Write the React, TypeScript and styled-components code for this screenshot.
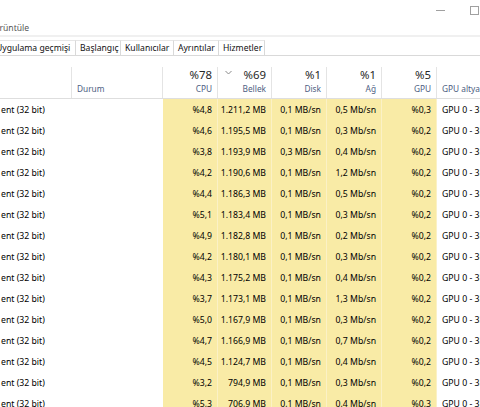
import React from "react";
import styled, { createGlobalStyle } from "styled-components";

const GlobalStyle = createGlobalStyle`
  html, body {
    margin: 0;
    padding: 0;
    background: #ffffff;
  }
  body {
    font-family: "Segoe UI", "Noto Sans", "Liberation Sans", sans-serif;
    color: #000;
  }
`;

const YELLOW = "#f9eba6";
const LABEL = "#4d6082";
const COLS = "72px 91px 55px 54px 55px 55px 55px 90px";

const Window = styled.div`
  width: 480px;
  height: 407px;
  overflow: hidden;
  background: #fff;
`;

const TitleBar = styled.div`
  height: 21px;
  display: flex;
  justify-content: flex-end;
`;

const Controls = styled.div`
  display: flex;
  margin-right: -45px;
`;

const WinButton = styled.div`
  width: 34px;
  height: 21px;
  display: flex;
  align-items: center;
  justify-content: center;
`;

const MinGlyph = styled.span`
  display: block;
  width: 9px;
  height: 1px;
  background: #a0a0a0;
`;

const MaxGlyph = styled.span`
  display: block;
  width: 7px;
  height: 7px;
  border: 1px solid #a0a0a0;
`;

const MenuBar = styled.div`
  height: 14px;
  display: flex;
  align-items: center;
  border-bottom: 2px solid #f0f0f0;
  font-size: 8.6px;
  color: #555;
`;

const MenuItem = styled.span<{ $offset?: number }>`
  margin-left: ${({ $offset }) => $offset ?? 0}px;
`;

const TabStrip = styled.div`
  margin-top: 3px;
  height: 16px;
  display: flex;
  border-bottom: 1px solid #d9d9d9;
  box-sizing: border-box;
  margin-left: -8px;
`;

const Tab = styled.div<{ $w: number }>`
  width: ${({ $w }) => $w}px;
  box-sizing: border-box;
  display: flex;
  align-items: center;
  padding-left: 4px;
  border-right: 1px solid #d9d9d9;
  border-top: 1px solid #e6e6e6;
  font-size: 8.6px;
  color: #111;
  white-space: nowrap;
  background: #fff;
`;

const Header = styled.div`
  display: grid;
  grid-template-columns: ${COLS};
  height: 43px;
  padding-top: 11px;
  box-sizing: border-box;
  border-bottom: 1px solid #dedede;
`;

const HeadCell = styled.div<{ $left?: boolean }>`
  position: relative;
  border-right: 1px solid #e4e4e4;
  display: flex;
  flex-direction: column;
  align-items: ${({ $left }) => ($left ? "flex-start" : "flex-end")};
  justify-content: flex-end;
  padding: 0 5px 2px 5px;
  white-space: nowrap;
  overflow: hidden;
`;

const Percent = styled.div`
  font-size: 11.4px;
  line-height: 15px;
  color: #262626;
`;

const Label = styled.div`
  font-size: 8.3px;
  line-height: 14px;
  color: ${LABEL};
`;

const SortMark = styled.svg`
  position: absolute;
  left: 7px;
  top: 3px;
`;

const Row = styled.div`
  display: grid;
  grid-template-columns: ${COLS};
  height: 21px;
`;

const Cell = styled.div<{ $heat?: boolean; $left?: boolean }>`
  display: flex;
  align-items: center;
  justify-content: ${({ $left }) => ($left ? "flex-start" : "flex-end")};
  padding: 0 5px;
  font-size: 8.7px;
  white-space: nowrap;
  overflow: hidden;
  background: ${({ $heat }) => ($heat ? YELLOW : "transparent")};
  border-right: 1px solid ${({ $heat }) => ($heat ? "#fbf1c6" : "transparent")};
`;

const NameCell = styled(Cell)`
  padding-left: 1px;
`;

type Proc = [string, string, string, string, string];

const rows: Proc[] = [
  ["%4,8", "1.211,2 MB", "0,1 MB/sn", "0,5 Mb/sn", "%0,3"],
  ["%4,6", "1.195,5 MB", "0,1 MB/sn", "0,3 Mb/sn", "%0,2"],
  ["%3,8", "1.193,9 MB", "0,3 MB/sn", "0,4 Mb/sn", "%0,2"],
  ["%4,2", "1.190,6 MB", "0,1 MB/sn", "1,2 Mb/sn", "%0,2"],
  ["%4,4", "1.186,3 MB", "0,1 MB/sn", "0,5 Mb/sn", "%0,2"],
  ["%5,1", "1.183,4 MB", "0,1 MB/sn", "0,3 Mb/sn", "%0,2"],
  ["%4,9", "1.182,8 MB", "0,1 MB/sn", "0,2 Mb/sn", "%0,2"],
  ["%4,2", "1.180,1 MB", "0,1 MB/sn", "0,3 Mb/sn", "%0,2"],
  ["%4,3", "1.175,2 MB", "0,1 MB/sn", "0,4 Mb/sn", "%0,2"],
  ["%3,7", "1.173,1 MB", "0,1 MB/sn", "1,3 Mb/sn", "%0,2"],
  ["%5,0", "1.167,9 MB", "0,1 MB/sn", "0,3 Mb/sn", "%0,2"],
  ["%4,7", "1.166,9 MB", "0,1 MB/sn", "0,7 Mb/sn", "%0,2"],
  ["%4,5", "1.124,7 MB", "0,1 MB/sn", "0,4 Mb/sn", "%0,2"],
  ["%3,2", "794,9 MB", "0,1 MB/sn", "0,3 Mb/sn", "%0,2"],
  ["%5,3", "706,9 MB", "0,1 MB/sn", "0,4 Mb/sn", "%0,3"],
];

const tabs: [string, number][] = [
  ["Uygulama geçmişi", 84],
  ["Başlangıç", 45],
  ["Kullanıcılar", 53],
  ["Ayrıntılar", 45],
  ["Hizmetler", 46],
];

export default function App() {
  return (
    <Window>
      <GlobalStyle />
      <TitleBar>
        <Controls>
          <WinButton>
            <MinGlyph />
          </WinButton>
          <WinButton>
            <MaxGlyph />
          </WinButton>
          <WinButton />
        </Controls>
      </TitleBar>
      <MenuBar>
        <MenuItem $offset={-12}>Görüntüle</MenuItem>
      </MenuBar>
      <TabStrip>
        {tabs.map(([t, w]) => (
          <Tab key={t} $w={w}>
            {t}
          </Tab>
        ))}
      </TabStrip>
      <Header>
        <HeadCell $left />
        <HeadCell $left>
          <Label>Durum</Label>
        </HeadCell>
        <HeadCell>
          <Percent>%78</Percent>
          <Label>CPU</Label>
        </HeadCell>
        <HeadCell>
          <SortMark width="7" height="5" viewBox="0 0 7 5">
            <path d="M0.5 1 L3.5 4 L6.5 1" fill="none" stroke="#8a8a8a" strokeWidth="1" />
          </SortMark>
          <Percent>%69</Percent>
          <Label>Bellek</Label>
        </HeadCell>
        <HeadCell>
          <Percent>%1</Percent>
          <Label>Disk</Label>
        </HeadCell>
        <HeadCell>
          <Percent>%1</Percent>
          <Label>Ağ</Label>
        </HeadCell>
        <HeadCell>
          <Percent>%5</Percent>
          <Label>GPU</Label>
        </HeadCell>
        <HeadCell $left>
          <Label>GPU altyapısı</Label>
        </HeadCell>
      </Header>
      {rows.map((r, i) => (
        <Row key={i}>
          <NameCell $left>ent (32 bit)</NameCell>
          <Cell $left />
          {r.map((v, j) => (
            <Cell key={j} $heat>
              {v}
            </Cell>
          ))}
          <Cell $left>GPU 0 - 3D</Cell>
        </Row>
      ))}
    </Window>
  );
}
